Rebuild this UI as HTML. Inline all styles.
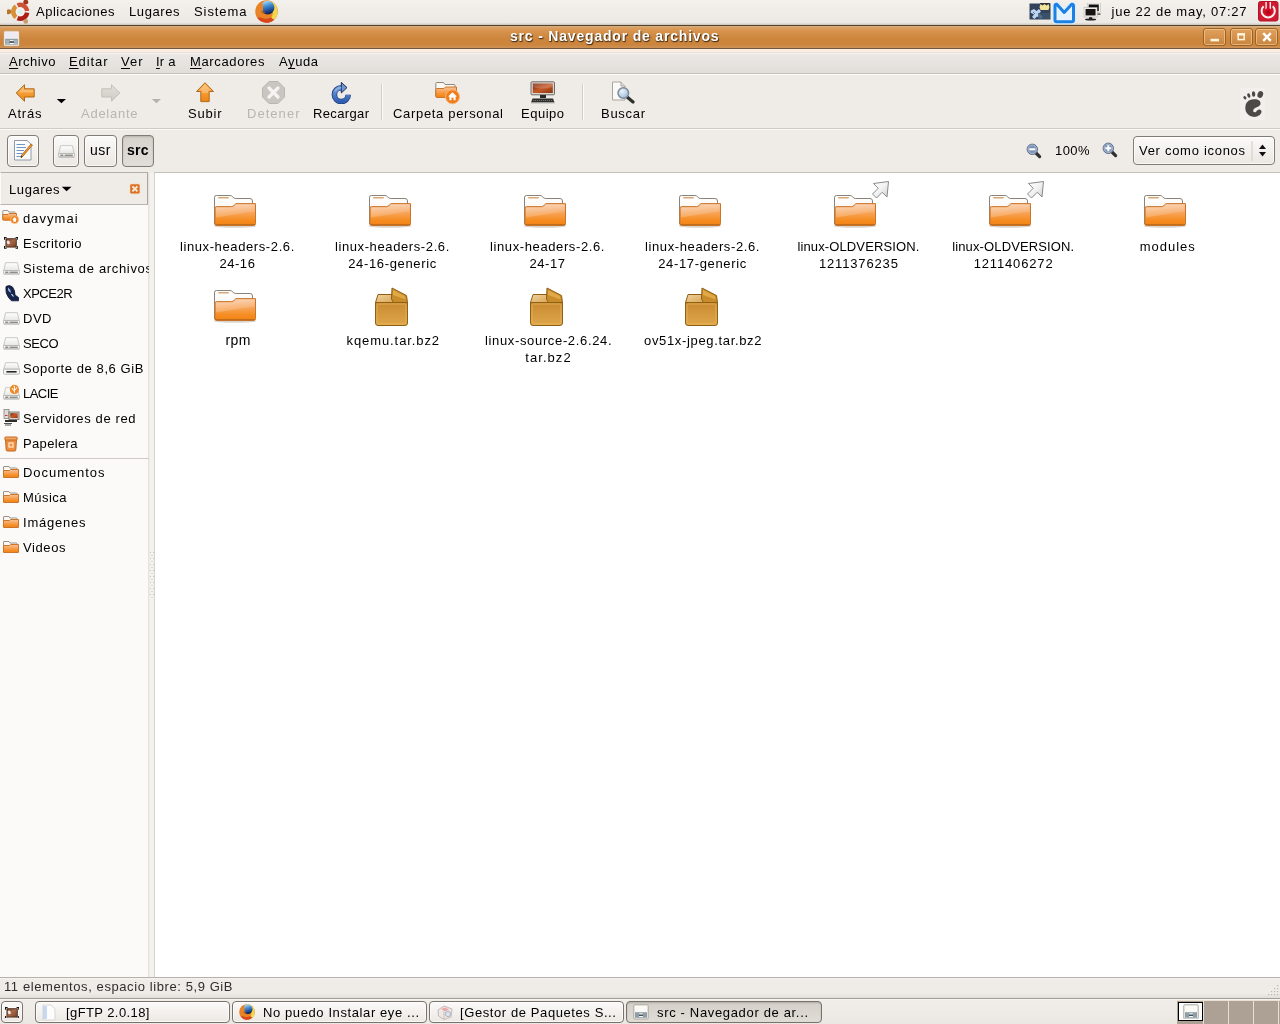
<!DOCTYPE html><html><head><meta charset="utf-8"><title>src</title><style>
*{margin:0;padding:0;box-sizing:border-box}
html,body{width:1280px;height:1024px;overflow:hidden;background:#efebe7;font-family:"Liberation Sans",sans-serif}
#root{position:absolute;left:0;top:0;width:1280px;height:1024px;will-change:transform;transform:translateZ(0)}
.a{position:absolute}
.t{position:absolute;white-space:nowrap;font-family:"Liberation Sans",sans-serif}
#toppanel{left:0;top:0;width:1280px;height:25px;background:linear-gradient(#f4f1ed 0,#ece8e3 23px,#d2cec8 24px,#c9c5bf 25px)}
#title{left:0;top:25px;width:1280px;height:24px;background:linear-gradient(#5e4224 0,#5e4224 1px,#cdb08a 1px,#d4a878 2px,#dc9c58 3px,#d48f48 8px,#cd853c 14px,#cc853e 20px,#cf8f4e 22px,#c98f5a 23px,#76563a 23px,#76563a 24px)}
#menubar{left:0;top:49px;width:1280px;height:25px;background:linear-gradient(#fff0e4 0,#fbece1 3px,#e9e1d9 3px,#e9e1d9 4px,#f6f3ef 4px,#f6f3ef 5px,#eae8e5 5px,#e6e3df 15px,#e1ded9 24px,#c6c2bc 24px,#c6c2bc 25px)}
#toolbar{left:0;top:74px;width:1280px;height:55px;background:#efebe7;border-top:1px solid #fbfaf9;border-bottom:1px solid #cfcac3}
#locbar{left:0;top:129px;width:1280px;height:43px;background:#efebe7;border-top:1px solid #faf9f7}
.wb{position:absolute;top:28px;height:18px;width:23px;border:1px solid #9a6428;border-radius:3px;background:linear-gradient(#e0a05c,#c98540);box-shadow:inset 0 0 0 1px rgba(255,215,160,.55)}
.btn{position:absolute;border:1px solid #807b74;border-radius:4px;background:linear-gradient(#fbfaf9,#ebe7e2);box-shadow:inset 0 0 0 1px rgba(255,255,255,.7)}
.sep{position:absolute;width:1px;background:#d3cec7;border-right:1px solid #fbfaf9;box-sizing:content-box}
#sidebar{left:0;top:172px;width:149px;height:805px;background:#fbfaf9;overflow:hidden;border-right:1px solid #e6e2dd}
#sidehead{left:0;top:0;width:148px;height:33px;background:#efebe7;border:1px solid #aaa69f;border-left:1px solid #fbfaf9;border-top-color:#b3afa8;border-bottom-color:#b8b4ad}
#content{left:154px;top:172px;width:1126px;height:805px;background:#fff;border-top:1px solid #c4c0ba;border-left:1px solid #d6d2cc}
#status{left:0;top:977px;width:1280px;height:21px;background:linear-gradient(#b5b1ab 0,#b5b1ab 1px,#f6f4f1 1px,#efebe7 3px,#efebe7 16px,#e2ded9 21px)}
#botpanel{left:0;top:998px;width:1280px;height:26px;background:linear-gradient(#a19d96 0,#a19d96 1px,#faf9f7 1px,#f1eeea 2px,#ebe7e2)}
.task{position:absolute;top:1001px;height:22px;border:1px solid #77736c;border-radius:4px;background:linear-gradient(#fbfaf9,#ece8e3);box-shadow:inset 0 0 0 1px rgba(255,255,255,.7)}
.task.act{background:linear-gradient(#d5d0c9,#e0dcd6);box-shadow:inset 0 1px 2px rgba(0,0,0,.18)}
</style></head><body><div id="root"><svg width="0" height="0" style="position:absolute"><defs>
<linearGradient id="gF" x1="0" y1="0" x2="0" y2="1"><stop offset="0" stop-color="#f9c39a"/><stop offset=".4" stop-color="#f7a55c"/><stop offset=".75" stop-color="#f68d22"/><stop offset="1" stop-color="#f38213"/></linearGradient>
<linearGradient id="gFg" x1="0" y1="0" x2="1" y2="1"><stop offset="0" stop-color="#fff" stop-opacity=".35"/><stop offset="1" stop-color="#fff" stop-opacity=".05"/></linearGradient>
<linearGradient id="gBack" x1="0" y1="0" x2="0" y2="1"><stop offset="0" stop-color="#ffffff"/><stop offset="1" stop-color="#f3ede6"/></linearGradient>
<linearGradient id="gPk" x1="0" y1="0" x2="0" y2="1"><stop offset="0" stop-color="#c98a30"/><stop offset="1" stop-color="#dfa64a"/></linearGradient>
<linearGradient id="gPkT" x1="0" y1="0" x2="1" y2="1"><stop offset="0" stop-color="#f0d3a0"/><stop offset="1" stop-color="#d9a655"/></linearGradient>
<linearGradient id="gArr" x1="0" y1="0" x2="0" y2="1"><stop offset="0" stop-color="#fbb658"/><stop offset="1" stop-color="#ee8412"/></linearGradient>
<linearGradient id="gArrD" x1="0" y1="0" x2="0" y2="1"><stop offset="0" stop-color="#e2dfda"/><stop offset="1" stop-color="#cfcbc5"/></linearGradient>
<linearGradient id="gLnk" x1="0" y1="0" x2="1" y2="1"><stop offset="0" stop-color="#ffffff"/><stop offset=".5" stop-color="#f2f2f2"/><stop offset="1" stop-color="#cdcdcd"/></linearGradient>
<linearGradient id="gDrv" x1="0" y1="0" x2="0" y2="1"><stop offset="0" stop-color="#ffffff"/><stop offset="1" stop-color="#e6e6e3"/></linearGradient>
<linearGradient id="gScr" x1="0" y1="0" x2="1" y2="1"><stop offset="0" stop-color="#7a2208"/><stop offset=".5" stop-color="#c65a28"/><stop offset="1" stop-color="#8a3414"/></linearGradient>
<linearGradient id="gDsk" x1="0" y1="0" x2="1" y2="1"><stop offset="0" stop-color="#6a3a22"/><stop offset=".45" stop-color="#a8684a"/><stop offset="1" stop-color="#74401f"/></linearGradient>
<linearGradient id="gBlu" x1="0" y1="0" x2="0" y2="1"><stop offset="0" stop-color="#6f9fe0"/><stop offset="1" stop-color="#2f5eb0"/></linearGradient>
<radialGradient id="gLens" cx=".4" cy=".35" r=".7"><stop offset="0" stop-color="#eaf3fb"/><stop offset="1" stop-color="#9db8d6"/></radialGradient>
<filter id="soft" x="-10%" y="-10%" width="120%" height="120%"><feGaussianBlur stdDeviation=".45"/></filter>
<radialGradient id="gFxB" cx=".4" cy=".4" r=".65"><stop offset="0" stop-color="#f09432"/><stop offset=".7" stop-color="#e57e26"/><stop offset="1" stop-color="#c25a18"/></radialGradient>
<linearGradient id="gFxG" x1=".3" y1="0" x2=".6" y2="1"><stop offset="0" stop-color="#b4e2fa"/><stop offset=".35" stop-color="#4a94d6"/><stop offset=".7" stop-color="#1f4f9c"/><stop offset="1" stop-color="#10163a"/></linearGradient>
<radialGradient id="gFx" cx=".5" cy=".5" r=".5"><stop offset="0" stop-color="#1a1d45"/><stop offset=".45" stop-color="#2a3a78"/><stop offset=".5" stop-color="#d88a28"/><stop offset="1" stop-color="#e67a22"/></radialGradient>

<symbol id="folder" viewBox="0 0 44 34">
 <ellipse cx="22" cy="32" rx="21.5" ry="1.8" fill="#5a3a1a" opacity=".22"/>
 <path d="M1.5,30 V3.2 Q1.5,1.5 3.5,1.5 H17 Q18.8,1.5 19.8,3 Q20.8,4.5 22.8,4.5 H37 Q39.5,4.5 39.5,7 V30 Z" fill="url(#gBack)" stroke="#8b837a" stroke-width="1"/>
 <rect x="5" y="3" width="11" height="1.6" rx=".8" fill="#d8a878"/>
 <path d="M2,14.2 Q2,12.6 3.6,12.6 H18.5 Q20.4,12.6 21.3,11 Q22.2,9.6 24,9.6 H42.5 V29.5 Q42.5,31.5 40.5,31.5 H3.5 Q2,31.5 2,29.5 Z" fill="url(#gF)" stroke="#c9762c" stroke-width="1"/>
 <path d="M3,14.6 Q3,13.6 4,13.6 H19 Q20.8,13.6 21.8,12 Q22.5,10.6 24,10.6 H41.5 V17.5 L3,23.5 Z" fill="url(#gFg)"/>
 <path d="M2,30.6 H42" stroke="#a8611f" stroke-width="1" opacity=".7"/>
</symbol>

<symbol id="lnk" viewBox="0 0 20 20">
 <path d="M18.5,1.5 L17,17 L12.2,12.3 L6.5,18 L2.5,14 L8.2,8.3 L3.5,3.5 Z" fill="url(#gLnk)" stroke="#7e7e7e" stroke-width=".9" stroke-linejoin="round"/>
</symbol>

<symbol id="pkg" viewBox="0 0 36 40">
 <path d="M1.5,15.5 L4,7.5 H18 L20,15.5 Z" fill="url(#gPkT)" stroke="#8f5f14" stroke-width="1" stroke-linejoin="round"/>
 <path d="M1.5,15.5 H33.5 V36 Q33.5,38.5 31,38.5 H4 Q1.5,38.5 1.5,36 Z" fill="url(#gPk)" stroke="#8f5f14" stroke-width="1" stroke-linejoin="round"/>
 <rect x="3" y="17" width="29" height="20" rx="1.5" fill="none" stroke="#e8b860" stroke-width="1" opacity=".7"/>
 <path d="M18,1 L32.5,8.5 L33.5,15.5 H19.5 L17.5,12 Z" fill="#c98c2a" stroke="#8f5f14" stroke-width="1" stroke-linejoin="round"/>
 <path d="M19,3 L31,9.3 L31.6,12.5 L19,8 Z" fill="#e6b04c" opacity=".8"/>
</symbol>

<symbol id="sfolder" viewBox="0 0 16 16">
 <path d="M.5,13 V3 Q.5,2.5 1,2.5 H6 L7,4 H13.5 Q14,4 14,4.5 V13 Z" fill="#fbf7f2" stroke="#9c9287" stroke-width="1"/>
 <path d="M.5,6.5 H6.5 L7.5,5.5 H15.5 V13 Q15.5,13.5 15,13.5 H1 Q.5,13.5 .5,13 Z" fill="url(#gF)" stroke="#c9762c" stroke-width="1"/>
</symbol>

<symbol id="drive" viewBox="0 0 17 13">
 <path d="M.7,8.6 L2.6,.7 H14.4 L16.3,8.6 Z" fill="url(#gDrv)" stroke="#c2c2be" stroke-width=".9" stroke-linejoin="round"/>
 <rect x=".5" y="8.5" width="16" height="3.2" rx=".8" fill="#f6f6f4" stroke="#b2b2ae" stroke-width=".9"/>
 <path d="M2.2,10.2 H5.4 M6.6,10.2 H14.8" stroke="#5e5e5a" stroke-width="1"/><path d="M.5,12.5 H16.5" stroke="#000" stroke-opacity=".13" stroke-width="1"/>
</symbol>
<symbol id="rdrive" viewBox="0 0 17 13">
 <path d="M.7,7.2 L2.6,.7 H14.4 L16.3,7.2 Z" fill="url(#gDrv)" stroke="#c2c2be" stroke-width=".9" stroke-linejoin="round"/>
 <rect x=".5" y="7.2" width="16" height="5" rx=".8" fill="#f6f6f4" stroke="#b2b2ae" stroke-width=".9"/>
 <path d="M3.4,9.8 H13.6" stroke="#1c1c1c" stroke-width="1.5"/>
</symbol>

<symbol id="zmag" viewBox="0 0 16 16">
 <path d="M9.5,9.5 L13.6,13.6" stroke="#30302e" stroke-width="3.2" stroke-linecap="round"/>
 <circle cx="6.3" cy="6.3" r="5.2" fill="#7d93b6" stroke="#5e6f8a" stroke-width="1"/>
 <circle cx="6.3" cy="6.3" r="4.2" fill="none" stroke="#b4c3d8" stroke-width="1" opacity=".8"/>
</symbol>
<symbol id="mag" viewBox="0 0 14 14">
 <path d="M8,8 L12.3,12.3" stroke="#3a3a38" stroke-width="2.6" stroke-linecap="round"/>
 <circle cx="5.5" cy="5.5" r="4.3" fill="url(#gLens)" stroke="#6d7b8c" stroke-width="1.3"/>
</symbol>
</defs></svg>
<div id="toppanel" class="a"></div>
<span class="t " style="left:36.0px;top:4.0px;font-size:13px;line-height:16px;letter-spacing:0.50px;color:#000;">Aplicaciones</span>
<span class="t " style="left:129.0px;top:4.0px;font-size:13px;line-height:16px;letter-spacing:0.59px;color:#000;">Lugares</span>
<span class="t " style="left:194.0px;top:4.0px;font-size:13px;line-height:16px;letter-spacing:0.92px;color:#000;">Sistema</span>
<span class="t " style="left:1111.5px;top:4.0px;font-size:13px;line-height:16px;letter-spacing:0.77px;color:#000;">jue 22 de may, 07:27</span>
<div id="title" class="a"></div>
<span class="t " style="left:510.0px;top:28.1px;font-size:14px;line-height:17px;letter-spacing:0.81px;color:#fff;font-weight:bold;text-shadow:1px 1px 1px #4e3212,0 1px 1px #6b4520;">src - Navegador de archivos</span>
<div class="wb" style="left:1203px"></div>
<div class="wb" style="left:1230px"></div>
<div class="wb" style="left:1255px"></div>
<div id="menubar" class="a"></div>
<span class="t" style="left:9px;top:53.5px;font-size:13px;line-height:16px;letter-spacing:0.53px"><u style="text-underline-offset:2px;text-decoration-thickness:1px;text-decoration-skip-ink:none">A</u>rchivo</span>
<span class="t" style="left:69px;top:53.5px;font-size:13px;line-height:16px;letter-spacing:0.91px"><u style="text-underline-offset:2px;text-decoration-thickness:1px;text-decoration-skip-ink:none">E</u>ditar</span>
<span class="t" style="left:121px;top:53.5px;font-size:13px;line-height:16px;letter-spacing:0.99px"><u style="text-underline-offset:2px;text-decoration-thickness:1px;text-decoration-skip-ink:none">V</u>er</span>
<span class="t" style="left:156px;top:53.5px;font-size:13px;line-height:16px;letter-spacing:0.24px"><u style="text-underline-offset:2px;text-decoration-thickness:1px;text-decoration-skip-ink:none">I</u>r a</span>
<span class="t" style="left:190px;top:53.5px;font-size:13px;line-height:16px;letter-spacing:0.65px"><u style="text-underline-offset:2px;text-decoration-thickness:1px;text-decoration-skip-ink:none">M</u>arcadores</span>
<span class="t" style="left:279px;top:53.5px;font-size:13px;line-height:16px;letter-spacing:0.59px">A<u style="text-underline-offset:2px;text-decoration-thickness:1px;text-decoration-skip-ink:none">y</u>uda</span>
<div id="toolbar" class="a"></div>
<span class="t " style="left:8.0px;top:105.5px;font-size:13px;line-height:16px;letter-spacing:0.79px;color:#000;">Atrás</span>
<span class="t " style="left:81.0px;top:105.5px;font-size:13px;line-height:16px;letter-spacing:0.74px;color:#b9b5af;">Adelante</span>
<span class="t " style="left:188.0px;top:105.5px;font-size:13px;line-height:16px;letter-spacing:0.79px;color:#000;">Subir</span>
<span class="t " style="left:247.0px;top:105.5px;font-size:13px;line-height:16px;letter-spacing:1.04px;color:#b9b5af;">Detener</span>
<span class="t " style="left:313.0px;top:105.5px;font-size:13px;line-height:16px;letter-spacing:0.36px;color:#000;">Recargar</span>
<span class="t " style="left:393.0px;top:105.5px;font-size:13px;line-height:16px;letter-spacing:0.68px;color:#000;">Carpeta personal</span>
<span class="t " style="left:521.0px;top:105.5px;font-size:13px;line-height:16px;letter-spacing:0.50px;color:#000;">Equipo</span>
<span class="t " style="left:601.0px;top:105.5px;font-size:13px;line-height:16px;letter-spacing:0.71px;color:#000;">Buscar</span>
<div class="sep" style="left:381px;top:84px;height:36px"></div>
<div class="sep" style="left:582px;top:84px;height:36px"></div>
<div id="locbar" class="a"></div>
<div class="btn" style="left:7px;top:135px;width:32px;height:32px"></div>
<div class="btn" style="left:53px;top:135px;width:26px;height:32px"></div>
<div class="btn" style="left:84px;top:135px;width:33px;height:32px"></div>
<div class="btn" style="left:122px;top:135px;width:32px;height:32px;background:linear-gradient(#d6d2cc,#e1ddd8);box-shadow:inset 0 1px 2px rgba(0,0,0,.15)"></div>
<span class="t " style="left:90.0px;top:141.6px;font-size:14px;line-height:17px;letter-spacing:0.53px;color:#000;">usr</span>
<span class="t " style="left:127.0px;top:141.6px;font-size:14px;line-height:17px;letter-spacing:0.24px;color:#000;font-weight:bold;">src</span>
<span class="t " style="left:1055.0px;top:142.5px;font-size:13px;line-height:16px;letter-spacing:0.42px;color:#000;">100%</span>
<div class="btn" style="left:1133px;top:136px;width:142px;height:29px"></div>
<span class="t " style="left:1139.0px;top:142.5px;font-size:13px;line-height:16px;letter-spacing:0.71px;color:#000;">Ver como iconos</span>
<div id="sidebar" class="a"><div id="sidehead" class="a"></div></div>
<span class="t " style="left:9.0px;top:181.5px;font-size:13px;line-height:16px;letter-spacing:0.59px;color:#000;">Lugares</span>
<div class="a" style="left:0;top:172px;width:149px;height:805px;overflow:hidden"><span class="t " style="left:23.0px;top:38.5px;font-size:13px;line-height:16px;letter-spacing:1.02px;color:#000;">davymai</span><span class="t " style="left:23.0px;top:63.5px;font-size:13px;line-height:16px;letter-spacing:0.48px;color:#000;">Escritorio</span><span class="t " style="left:23.0px;top:88.5px;font-size:13px;line-height:16px;letter-spacing:0.66px;color:#000;">Sistema de archivos</span><span class="t " style="left:23.0px;top:113.5px;font-size:13px;line-height:16px;letter-spacing:-0.50px;color:#000;">XPCE2R</span><span class="t " style="left:23.0px;top:138.5px;font-size:13px;line-height:16px;letter-spacing:0.53px;color:#000;">DVD</span><span class="t " style="left:23.0px;top:163.5px;font-size:13px;line-height:16px;letter-spacing:-0.45px;color:#000;">SECO</span><span class="t " style="left:23.0px;top:188.5px;font-size:13px;line-height:16px;letter-spacing:0.58px;color:#000;">Soporte de 8,6 GiB</span><span class="t " style="left:23.0px;top:213.5px;font-size:13px;line-height:16px;letter-spacing:-0.52px;color:#000;">LACIE</span><span class="t " style="left:23.0px;top:238.5px;font-size:13px;line-height:16px;letter-spacing:0.62px;color:#000;">Servidores de red</span><span class="t " style="left:23.0px;top:263.5px;font-size:13px;line-height:16px;letter-spacing:0.35px;color:#000;">Papelera</span><span class="t " style="left:23.0px;top:292.5px;font-size:13px;line-height:16px;letter-spacing:0.95px;color:#000;">Documentos</span><span class="t " style="left:23.0px;top:317.5px;font-size:13px;line-height:16px;letter-spacing:0.46px;color:#000;">Música</span><span class="t " style="left:23.0px;top:342.5px;font-size:13px;line-height:16px;letter-spacing:0.77px;color:#000;">Imágenes</span><span class="t " style="left:23.0px;top:367.5px;font-size:13px;line-height:16px;letter-spacing:0.60px;color:#000;">Videos</span><div class="a" style="left:0;top:286px;width:149px;height:1px;background:#cfcac3"></div></div>
<div class="a" style="left:150px;top:173px;width:4px;height:804px;background:#f4f2ef"></div>
<svg class="a" style="left:150px;top:552px" width="4" height="48"><rect x="0" y="0" width="1" height="1" fill="#c9c5bf"/><rect x="3" y="0" width="1" height="1" fill="#c9c5bf"/><rect x="1.5" y="3" width="1" height="1" fill="#c9c5bf"/><rect x="0" y="6" width="1" height="1" fill="#c9c5bf"/><rect x="3" y="6" width="1" height="1" fill="#c9c5bf"/><rect x="1.5" y="9" width="1" height="1" fill="#c9c5bf"/><rect x="0" y="12" width="1" height="1" fill="#c9c5bf"/><rect x="3" y="12" width="1" height="1" fill="#c9c5bf"/><rect x="1.5" y="15" width="1" height="1" fill="#c9c5bf"/><rect x="0" y="18" width="1" height="1" fill="#c9c5bf"/><rect x="3" y="18" width="1" height="1" fill="#c9c5bf"/><rect x="1.5" y="21" width="1" height="1" fill="#c9c5bf"/><rect x="0" y="24" width="1" height="1" fill="#c9c5bf"/><rect x="3" y="24" width="1" height="1" fill="#c9c5bf"/><rect x="1.5" y="27" width="1" height="1" fill="#c9c5bf"/><rect x="0" y="30" width="1" height="1" fill="#c9c5bf"/><rect x="3" y="30" width="1" height="1" fill="#c9c5bf"/><rect x="1.5" y="33" width="1" height="1" fill="#c9c5bf"/><rect x="0" y="36" width="1" height="1" fill="#c9c5bf"/><rect x="3" y="36" width="1" height="1" fill="#c9c5bf"/><rect x="1.5" y="39" width="1" height="1" fill="#c9c5bf"/><rect x="0" y="42" width="1" height="1" fill="#c9c5bf"/><rect x="3" y="42" width="1" height="1" fill="#c9c5bf"/><rect x="1.5" y="45" width="1" height="1" fill="#c9c5bf"/></svg>
<div id="content" class="a"></div>
<span class="t " style="left:179.9px;top:238.5px;font-size:13px;line-height:16px;letter-spacing:0.61px;color:#000;">linux-headers-2.6.</span>
<span class="t " style="left:219.4px;top:255.5px;font-size:13px;line-height:16px;letter-spacing:0.56px;color:#000;">24-16</span>
<span class="t " style="left:334.9px;top:238.5px;font-size:13px;line-height:16px;letter-spacing:0.61px;color:#000;">linux-headers-2.6.</span>
<span class="t " style="left:348.2px;top:255.5px;font-size:13px;line-height:16px;letter-spacing:0.65px;color:#000;">24-16-generic</span>
<span class="t " style="left:490.0px;top:238.5px;font-size:13px;line-height:16px;letter-spacing:0.61px;color:#000;">linux-headers-2.6.</span>
<span class="t " style="left:529.5px;top:255.5px;font-size:13px;line-height:16px;letter-spacing:0.56px;color:#000;">24-17</span>
<span class="t " style="left:645.0px;top:238.5px;font-size:13px;line-height:16px;letter-spacing:0.61px;color:#000;">linux-headers-2.6.</span>
<span class="t " style="left:658.2px;top:255.5px;font-size:13px;line-height:16px;letter-spacing:0.65px;color:#000;">24-17-generic</span>
<span class="t " style="left:797.4px;top:238.5px;font-size:13px;line-height:16px;letter-spacing:0.13px;color:#000;">linux-OLDVERSION.</span>
<span class="t " style="left:818.9px;top:255.5px;font-size:13px;line-height:16px;letter-spacing:0.85px;color:#000;">1211376235</span>
<span class="t " style="left:952.2px;top:238.5px;font-size:13px;line-height:16px;letter-spacing:0.13px;color:#000;">linux-OLDVERSION.</span>
<span class="t " style="left:973.7px;top:255.5px;font-size:13px;line-height:16px;letter-spacing:0.85px;color:#000;">1211406272</span>
<span class="t " style="left:1139.8px;top:238.5px;font-size:13px;line-height:16px;letter-spacing:0.98px;color:#000;">modules</span>
<span class="t " style="left:225.5px;top:331.6px;font-size:14px;line-height:17px;letter-spacing:0.44px;color:#000;">rpm</span>
<span class="t " style="left:346.6px;top:332.5px;font-size:13px;line-height:16px;letter-spacing:0.90px;color:#000;">kqemu.tar.bz2</span>
<span class="t " style="left:485.0px;top:332.5px;font-size:13px;line-height:16px;letter-spacing:0.65px;color:#000;">linux-source-2.6.24.</span>
<span class="t " style="left:525.3px;top:349.5px;font-size:13px;line-height:16px;letter-spacing:1.05px;color:#000;">tar.bz2</span>
<span class="t " style="left:644.0px;top:332.5px;font-size:13px;line-height:16px;letter-spacing:0.66px;color:#000;">ov51x-jpeg.tar.bz2</span>
<div id="status" class="a"></div>
<span class="t " style="left:4.0px;top:979.0px;font-size:13px;line-height:16px;letter-spacing:0.59px;color:#2e2e2e;">11 elementos, espacio libre: 5,9 GiB</span>
<div id="botpanel" class="a"></div>
<svg class="a" style="left:1268px;top:984px" width="12" height="13"><rect x="9" y="1" width="1.2" height="1.2" fill="#b9b4ad"/><rect x="6" y="4" width="1.2" height="1.2" fill="#b9b4ad"/><rect x="9" y="4" width="1.2" height="1.2" fill="#b9b4ad"/><rect x="3" y="7" width="1.2" height="1.2" fill="#b9b4ad"/><rect x="6" y="7" width="1.2" height="1.2" fill="#b9b4ad"/><rect x="9" y="7" width="1.2" height="1.2" fill="#b9b4ad"/><rect x="0" y="10" width="1.2" height="1.2" fill="#b9b4ad"/><rect x="3" y="10" width="1.2" height="1.2" fill="#b9b4ad"/><rect x="6" y="10" width="1.2" height="1.2" fill="#b9b4ad"/><rect x="9" y="10" width="1.2" height="1.2" fill="#b9b4ad"/></svg>
<div class="task" style="left:1px;width:22px"></div>
<div class="task" style="left:35px;width:195px"></div>
<div class="task" style="left:232px;width:195px"></div>
<div class="task" style="left:429px;width:195px"></div>
<div class="task act" style="left:626px;width:196px"></div>
<span class="t " style="left:66.0px;top:1005.0px;font-size:13px;line-height:16px;letter-spacing:0.41px;color:#000;">[gFTP 2.0.18]</span>
<span class="t " style="left:263.0px;top:1005.0px;font-size:13px;line-height:16px;letter-spacing:0.60px;color:#000;">No puedo Instalar eye ...</span>
<span class="t " style="left:460.0px;top:1005.0px;font-size:13px;line-height:16px;letter-spacing:0.59px;color:#000;">[Gestor de Paquetes S...</span>
<span class="t " style="left:657.0px;top:1005.0px;font-size:13px;line-height:16px;letter-spacing:0.66px;color:#000;">src - Navegador de ar...</span>
<svg class="a" style="left:7px;top:0px" width="24" height="24" viewBox="0 0 24 24">
<g transform="translate(13.2,11.8) scale(1.07)">
 <path d="M-3.85,5.11 A6.4,6.4 0 0 1 -3.85,-5.11" fill="none" stroke="#d69038" stroke-width="4.3"/>
 <path d="M-2.50,-5.89 A6.4,6.4 0 0 1 6.35,-0.78" fill="none" stroke="#cb5236" stroke-width="4.3"/>
 <path d="M6.35,0.78 A6.4,6.4 0 0 1 -2.50,5.89" fill="none" stroke="#ae1d16" stroke-width="4.3"/>
 <circle cx="0" cy="0" r="4.2" fill="#fdeeee"/><circle cx="-.3" cy="0" r="2.5" fill="#d2f6ee"/>
 <circle cx="-10.60" cy="0.00" r="2.3" fill="#b87428"/>
 <circle cx="5.20" cy="-9.01" r="2.3" fill="#a2341a"/>
 <circle cx="5.20" cy="9.01" r="2.2" fill="#c79a70"/>
</g></svg>
<svg class="a" style="left:253.5px;top:-1.0px" width="25.0" height="25.0" viewBox="0 0 25.0 25.0"><g transform="translate(12.5,12.5) scale(1.0)" filter="url(#soft)">
 <circle r="11.2" fill="url(#gFxB)"/>
 <path d="M3,-10.8 A11.2,11.2 0 0 1 7.5,8.3 Q4,7.5 5.5,3 Q9,-3 3,-10.8 Z" fill="#f2d84e"/>
 <path d="M-9.3,6.2 A11.2,11.2 0 0 0 7.5,8.3 Q5,5.5 1,5.8 Q-5,6 -9.3,6.2 Z" fill="#d8461c"/>
 <circle cx="1" cy="-3.8" r="6.9" fill="url(#gFxG)"/>
 <path d="M-4.5,-9 Q-2.5,-5 -3.5,-2 Q-4,1.5 -1,3.3 Q3,5 6.8,1.5 Q5,7.5 -1,7.3 Q-7,6.5 -9.5,2 Q-11,-3 -8,-7.5 Q-6,-9.5 -4.5,-9Z" fill="#e98428"/>
 <path d="M-5.5,-1 Q-3,1 -1.5,0 Q-1.5,2.2 -3.5,2 Q-5,1.2 -5.5,-1Z" fill="#a9521a"/>
</g></svg>
<svg class="a" style="left:1029px;top:3px" width="22" height="17" viewBox="0 0 22 17"><rect x=".5" y=".5" width="21" height="16" fill="#32425a"/>
<path d="M2,7.5 l3,-1.5 2.5,2 2.5,-2 2,2.5 -2,2 3.5,3 -2,2.5 -3.5,-2.5 -2.5,2.5 -2.5,-2 2,-2.5 -3.5,-2z" fill="#bcd3f2"/><path d="M4,9 l2,2 M9,14 l2,1" stroke="#5b78a8" stroke-width="1"/>
<path d="M11,0 h10 v7 h-10 z" fill="#2a2f3a"/>
<path d="M11.5,1 l2,1.5 2,-1.5 2,1.5 2,-1.5 1,3 -1,3 h-8 l-1,-3z" fill="#f1e39a"/>
<path d="M9,10 h12 v6 h-12z" fill="#3d556e" opacity=".8"/></svg>
<svg class="a" style="left:1052px;top:1px" width="24" height="23" viewBox="0 0 24 23"><path d="M3,19 V5 Q3,3.2 4.8,3.2 L12.2,11.5 L19.7,3.2 Q21.5,3.2 21.5,5 V19 Q21.5,20.8 19.7,20.8 H4.8 Q3,20.8 3,19Z" fill="#eaf5ff" stroke="#d9eeff" stroke-width="5" stroke-linejoin="round"/>
<path d="M3,19 V5 Q3,3.2 4.8,3.2 L12.2,11.5 L19.7,3.2 Q21.5,3.2 21.5,5 V19 Q21.5,20.8 19.7,20.8 H4.8 Q3,20.8 3,19Z" fill="#e6f3ff" stroke="#1b82e4" stroke-width="3" stroke-linejoin="round"/></svg>
<svg class="a" style="left:1083px;top:3px" width="18" height="18" viewBox="0 0 18 18"><rect x="5" y=".8" width="11.5" height="8" fill="#111" stroke="#f4f3f1" stroke-width="1.4"/><rect x="4.2" y="0" width="13.1" height="9.6" fill="none" stroke="#b4b1ac" stroke-width=".5"/>
<rect x="1.8" y="5.2" width="11.5" height="8" fill="#15120f" stroke="#f6f5f3" stroke-width="1.5"/><rect x="1" y="4.4" width="13.1" height="9.6" fill="none" stroke="#aaa7a2" stroke-width=".5"/>
<rect x="6" y="14.2" width="3.2" height="1.8" fill="#222"/><ellipse cx="7.6" cy="16.6" rx="5.6" ry="1" fill="#1e1e1e"/>
<rect x="14.5" y="10.5" width="3" height="1.2" fill="#333"/></svg>
<svg class="a" style="left:1258px;top:1px" width="21" height="21" viewBox="0 0 21 21"><rect x=".5" y=".5" width="19.5" height="19.5" rx="2" fill="#cf1a30" stroke="#b31226" stroke-width="1"/>
<path d="M5.6,5.2 A6.6,6.6 0 1 0 14.8,5.2" fill="none" stroke="#fdeff0" stroke-width="2"/>
<rect x="7.4" y="1" width="5.6" height="10.5" fill="#fdeff0"/><rect x="8.8" y="1" width="2.8" height="9.5" fill="#d01028"/>
<circle cx="10.2" cy="11" r="3.8" fill="#d40d24"/><circle cx="10.2" cy="11.5" r="2" fill="#b00818"/></svg>
<svg class="a" style="left:3px;top:29.8px" width="17" height="17" viewBox="0 0 15.6 16"><rect x=".5" y=".8" width="14.6" height="14.4" rx="1" fill="#fbf6ee" stroke="#b48b58" stroke-width="1" stroke-opacity=".6"/>
<rect x="2" y="2" width="11.5" height="5.5" fill="#eeeaf2"/>
<rect x="1.8" y="8.2" width="12" height="5.6" fill="#8e9ea8"/>
<rect x="2.5" y="10" width="3" height="1" fill="#b8c8d0"/><rect x="10" y="10" width="3" height="1" fill="#b8c8d0"/>
<rect x="2.5" y="12" width="3" height="1" fill="#b8c8d0"/><rect x="10" y="12" width="3" height="1" fill="#b8c8d0"/>
<rect x="6.2" y="9.6" width="3.6" height="1" fill="#fff"/><rect x="6" y="10.8" width="4" height="1" fill="#222"/><rect x="6.2" y="12.2" width="3.6" height="1" fill="#fff"/></svg>
<svg class="a" style="left:1203px;top:28px" width="76" height="18" viewBox="0 0 76 18"><rect x="7.5" y="10.8" width="8.5" height="2.6" fill="#fff6dc"/>
<rect x="35.2" y="6" width="6" height="5.6" fill="none" stroke="#fff6dc" stroke-width="1.5"/><rect x="34.45" y="5.2" width="7.5" height="2.3" fill="#fff6dc"/>
<path d="M60.2,5.2 L67.8,12.8 M67.8,5.2 L60.2,12.8" stroke="#fff" stroke-width="2.4"/></svg>
<svg class="a" style="left:14px;top:82px" width="24" height="22" viewBox="0 0 24 22"><path d="M2.2,11 L10.5,2.7 V6.8 H20.2 V15 H10.5 V19.3 Z" fill="url(#gArr)" stroke="#b06a1c" stroke-width="1" stroke-linejoin="round"/><path d="M3.8,11 L9.6,5.2 V7.8 H19.2 V10.5 H4.4Z" fill="#fff" opacity=".25"/></svg>
<svg class="a" style="left:56px;top:98px" width="12" height="6" viewBox="0 0 12 6"><path d="M.8,1 H10 L5.4,5.2Z" fill="#000"/></svg>
<svg class="a" style="left:98px;top:82px" width="24" height="22" viewBox="0 0 24 22"><path d="M21.8,11 L13.5,2.7 V6.8 H3.8 V15 H13.5 V19.3 Z" fill="url(#gArrD)" stroke="#c4c0ba" stroke-width="1" stroke-linejoin="round"/></svg>
<svg class="a" style="left:151px;top:98px" width="12" height="6" viewBox="0 0 12 6"><path d="M.8,1 H10 L5.4,5.2Z" fill="#b5b1ab"/></svg>
<svg class="a" style="left:194px;top:81px" width="22" height="23" viewBox="0 0 22 23"><path d="M11,1.7 L19.5,10.5 H15.2 V20.6 H6.8 V10.5 H2.5 Z" fill="url(#gArr)" stroke="#b06a1c" stroke-width="1" stroke-linejoin="round"/><path d="M11,3.4 L17,9.5 H14.2 V12 H7.8 V9.5 H5Z" fill="#fff" opacity=".25"/></svg>
<svg class="a" style="left:261px;top:80px" width="25" height="25" viewBox="0 0 25 25"><path d="M8,1.5 H17 L23.5,8 V17 L17,23.5 H8 L1.5,17 V8 Z" fill="#c9c6c1" stroke="#bab7b2" stroke-width="1"/><path d="M8,8 L17,17 M17,8 L8,17" stroke="#f6f4f2" stroke-width="3.2" stroke-linecap="round"/></svg>
<svg class="a" style="left:330px;top:81px" width="22" height="23" viewBox="0 0 22 23"><path d="M11.3,6.8 A6.9,6.9 0 1 0 18.2,13.7" fill="none" stroke="#23407c" stroke-width="5.6"/>
<path d="M11.3,6.8 A6.9,6.9 0 1 0 18.2,13.9" fill="none" stroke="url(#gBlu)" stroke-width="4"/>
<path d="M11.3,1.4 L17,6.6 L11.3,12 Z" fill="#6f93cf" stroke="#1c2f66" stroke-width="1" stroke-linejoin="round"/>
<path d="M11.3,6.8 A6.9,6.9 0 0 0 5,10.5" fill="none" stroke="#9dbbe6" stroke-width="1.6" opacity=".7"/></svg>
<svg class="a" style="left:435px;top:81px" width="27" height="24" viewBox="0 0 27 24"><path d="M.8,15 V2.5 Q.8,1.5 1.8,1.5 H8.5 L10,3.5 H19 Q20,3.5 20,4.5 V15 Z" fill="#fbf7f2" stroke="#8e867c" stroke-width="1"/>
<path d="M.8,8.5 Q.8,7.5 1.8,7.5 H9 L10.5,6 H21.5 V15.5 Q21.5,16.5 20.5,16.5 H1.8 Q.8,16.5 .8,15.5 Z" fill="url(#gF)" stroke="#c9762c" stroke-width="1"/>
<circle cx="17.5" cy="15.8" r="7" fill="#ef7d1c" stroke="#f9b878" stroke-width="1"/>
<path d="M17.5,11.3 L22,15.6 H20.6 V19.3 H18.6 V16.8 H16.4 V19.3 H14.4 V15.6 H13 Z" fill="#fff"/></svg>
<svg class="a" style="left:530px;top:81px" width="26" height="23" viewBox="0 0 26 23"><rect x="1" y=".8" width="23.5" height="13" rx="1" fill="#d9d6d0" stroke="#6e6a64" stroke-width="1"/>
<rect x="2.8" y="2.5" width="20" height="9.5" fill="url(#gScr)"/>
<path d="M2.8,2.5 H22.8 V6 Q12,9 2.8,6Z" fill="#fff" opacity=".18"/>
<rect x="10" y="14" width="6" height="3" fill="#2a2a28"/>
<path d="M2.5,17.5 H23 L24.5,21.5 H1 Z" fill="#2e2e2c"/><path d="M3,19.5 H23" stroke="#888" stroke-width=".7" stroke-dasharray="1.2 .8"/>
<rect x="1" y="21.5" width="23.5" height="1" fill="#b9b6b0"/></svg>
<svg class="a" style="left:611px;top:81px" width="25" height="23" viewBox="0 0 25 23"><path d="M1.5,1 H10 L14,5 V19 H1.5 Z" fill="#fbfaf8" stroke="#a8a49e" stroke-width="1"/>
<path d="M10,1 V5 H14" fill="#e6e3de" stroke="#a8a49e" stroke-width="1"/>
<path d="M15.5,15.5 L22,21" stroke="#2e2e2c" stroke-width="3.2" stroke-linecap="round"/>
<circle cx="12.3" cy="12" r="5.3" fill="url(#gLens)" stroke="#7c8a9a" stroke-width="1.5"/></svg>
<svg class="a" style="left:1240px;top:88px" width="26" height="32" viewBox="0 0 26 32"><rect x="0" y="0" width="25" height="32" fill="#f6f4f2" opacity=".45"/>
<g fill="#4b4a47"><ellipse cx="20.3" cy="6.5" rx="2.8" ry="3.4" transform="rotate(18 20.3 6.5)"/>
<ellipse cx="13.6" cy="6" rx="1.7" ry="2.7" transform="rotate(-5 13.6 6)"/>
<ellipse cx="8.8" cy="7.5" rx="1.5" ry="2.3" transform="rotate(-20 8.8 7.5)"/>
<ellipse cx="4.9" cy="9.8" rx="1.3" ry="1.9" transform="rotate(-35 4.9 9.8)"/>
<path d="M12,11.5 C17,10.5 21,12 20.5,16 C20,19 15,19 13.5,21.5 C12.5,23.5 14,25 16,24 C17,21 20.5,20.5 21.5,23 C22,26.5 17,29.5 13,28.8 C7.5,28 4.5,23 5.5,18 C6,14.5 8.5,12 12,11.5 Z"/></g></svg>
<svg class="a" style="left:13px;top:139px" width="21" height="23" viewBox="0 0 21 23"><path d="M1.5,1.5 H14 L18,5 V21 H1.5 Z" fill="#fdfdfc" stroke="#8f9aa6" stroke-width="1"/>
<path d="M3.5,5.5 H12 M3.5,8.5 H13 M3.5,11.5 H11 M3.5,14.5 H9.5 M3.5,17.5 H8" stroke="#6f95c4" stroke-width="1.2"/>
<path d="M19.5,6 L10,17.2 L8,18.8 L8.6,16.2 L18,5 Z" fill="#f09a28" stroke="#a8601a" stroke-width=".8"/>
<path d="M8,18.8 L8.5,16.6 L9.8,17.6Z" fill="#222"/></svg>
<svg class="a" style="left:57.5px;top:144.5px;" width="17" height="13"><use href="#drive"/></svg>
<svg class="a" style="left:1025.5px;top:142.7px;" width="16" height="16"><use href="#zmag"/></svg>
<svg class="a" style="left:1025.5px;top:142.7px" width="16" height="16" viewBox="0 0 16 16"><rect x="3.3" y="5.3" width="6" height="2" fill="#fff"/></svg>
<svg class="a" style="left:1102px;top:142.3px;" width="16" height="16"><use href="#zmag"/></svg>
<svg class="a" style="left:1102px;top:142.3px" width="16" height="16" viewBox="0 0 16 16"><path d="M3.3,6.3 H9.3 M6.3,3.3 V9.3" stroke="#fff" stroke-width="2"/></svg>
<svg class="a" style="left:1251px;top:139px" width="20" height="24" viewBox="0 0 20 24"><path d="M1,2 V22" stroke="#cfcac3" stroke-width="1"/><path d="M11.5,5.5 L15,10 H8Z M11.5,17.5 L15,13 H8Z" fill="#111"/></svg>
<svg class="a" style="left:61px;top:186px" width="12" height="6" viewBox="0 0 12 6"><path d="M.8,.8 H10.5 L5.6,5.2Z" fill="#000"/></svg>
<svg class="a" style="left:129px;top:183px" width="12" height="12" viewBox="0 0 12 12"><rect x=".6" y=".6" width="10.6" height="10.6" rx="2" fill="#fbd9bd"/><rect x="1.2" y="1.2" width="9.4" height="9.4" rx="1.3" fill="#d9722a"/><path d="M3.4,3.4 L8.4,8.4 M8.4,3.4 L3.4,8.4" stroke="#fdebd8" stroke-width="1.9"/></svg>
<svg class="a" style="left:2px;top:209px" width="18" height="15" viewBox="0 0 18 15"><path d="M.8,10.5 V2 Q.8,1.5 1.3,1.5 H5.8 L6.8,3 H12.7 Q13.2,3 13.2,3.5 V10.5Z" fill="#fbf7f2" stroke="#9c9287" stroke-width="1"/>
<path d="M.8,5.5 H6 L7,4.5 H14.5 V10.5 Q14.5,11.2 13.8,11.2 H1.5 Q.8,11.2 .8,10.5Z" fill="url(#gF)" stroke="#c9762c" stroke-width="1"/>
<circle cx="12.6" cy="10.6" r="4" fill="#ef7d1c" stroke="#f9c08a" stroke-width=".8"/><path d="M12.6,8 L15,10.6 H14 V12.8 H11.2 V10.6 H10.2Z" fill="#fff"/></svg>
<svg class="a" style="left:4px;top:237.1px" width="14.2" height="11.8" viewBox="0 0 14.2 11.8"><rect x=".5" y=".5" width="13.2" height="10.8" fill="#fff"/><path d="M0,0 h2.6 v1 h-1.6 v1.8 h-1z M14.2,0 h-2.6 v1 h1.6 v1.8 h1z M0,11.8 h2.6 v-1 h-1.6 v-1.8 h-1z M14.2,11.8 h-2.6 v-1 h1.6 v-1.8 h1z" fill="#111"/>
<rect x="1.9" y="1.7" width="10.4" height="8.4" fill="url(#gDsk)" stroke="#3c2214" stroke-width=".8"/><ellipse cx="4.3" cy="5.3" rx="1.5" ry="1.9" fill="#fff" opacity=".85" transform="rotate(-25 4.3 5.3)"/></svg>
<svg class="a" style="left:3px;top:262px;" width="17" height="13"><use href="#drive"/></svg>
<svg class="a" style="left:4px;top:285px" width="16" height="17" viewBox="0 0 16 17"><path d="M2,1.5 Q5.5,-.5 8.5,2 Q11,5 11,10 L14.5,12.5 V15.8 H7.5 L4.5,12.5 Q1,8 2,1.5Z" fill="#16264e" stroke="#0b1430" stroke-width=".8"/>
<path d="M4,2.5 Q6.5,4 7,8 Q5,7 4,5Z" fill="#9db6e0"/><path d="M7.5,9 L9.5,11.5" stroke="#dfe8f6" stroke-width="1.2"/></svg>
<svg class="a" style="left:3px;top:312px;" width="17" height="13"><use href="#drive"/></svg>
<svg class="a" style="left:3px;top:337px;" width="17" height="13"><use href="#drive"/></svg>
<svg class="a" style="left:3px;top:362px;" width="17" height="13"><use href="#rdrive"/></svg>
<svg class="a" style="left:3px;top:387px;" width="17" height="13"><use href="#drive"/></svg>
<svg class="a" style="left:9.2px;top:383.8px" width="11" height="11" viewBox="0 0 11 11"><circle cx="5.4" cy="5.4" r="4.6" fill="#ee8a2a"/><path d="M5.4,1.8 V8.6 M3.2,4 Q3.2,6 5.4,6.6 M7.6,3.4 Q7.6,5.4 5.4,6" stroke="#fff" stroke-width="1" fill="none"/></svg>
<svg class="a" style="left:3px;top:409px" width="17" height="17" viewBox="0 0 17 17"><rect x="1" y=".5" width="5" height="9" fill="#dedbd6" stroke="#88847e" stroke-width=".8"/>
<rect x="6" y="3" width="10" height="7.5" fill="#d9d6d0" stroke="#66625c" stroke-width=".8"/><rect x="7.3" y="4.2" width="7.4" height="4.8" fill="url(#gScr)"/>
<rect x="2" y="11" width="12" height="2" fill="#2c2c2a"/><path d="M1,14.5 H9 M2,16 H8" stroke="#444" stroke-width=".9"/><rect x="2" y="6" width="2.5" height="1" fill="#c33"/></svg>
<svg class="a" style="left:4px;top:435px" width="14" height="17" viewBox="0 0 14 17"><path d="M1.5,4.5 H12.5 L11.8,15 Q11.7,16 10.7,16 H3.3 Q2.3,16 2.2,15Z" fill="#ef8d3e" stroke="#c2661c" stroke-width="1"/>
<rect x=".8" y="2" width="12.4" height="3" rx="1" fill="#f5a866" stroke="#c2661c" stroke-width="1"/>
<rect x="5" y="8" width="4" height="4" fill="none" stroke="#fbe3cc" stroke-width="1.3"/></svg>
<svg class="a" style="left:3px;top:464px;" width="16" height="16"><use href="#sfolder"/></svg>
<svg class="a" style="left:3px;top:489px;" width="16" height="16"><use href="#sfolder"/></svg>
<svg class="a" style="left:3px;top:514px;" width="16" height="16"><use href="#sfolder"/></svg>
<svg class="a" style="left:3px;top:539px;" width="16" height="16"><use href="#sfolder"/></svg>
<svg class="a" style="left:212.5px;top:193.5px;" width="44" height="34"><use href="#folder"/></svg>
<svg class="a" style="left:367.5px;top:193.5px;" width="44" height="34"><use href="#folder"/></svg>
<svg class="a" style="left:522.5px;top:193.5px;" width="44" height="34"><use href="#folder"/></svg>
<svg class="a" style="left:677.5px;top:193.5px;" width="44" height="34"><use href="#folder"/></svg>
<svg class="a" style="left:832.5px;top:193.5px;" width="44" height="34"><use href="#folder"/></svg>
<svg class="a" style="left:987.5px;top:193.5px;" width="44" height="34"><use href="#folder"/></svg>
<svg class="a" style="left:1142.5px;top:193.5px;" width="44" height="34"><use href="#folder"/></svg>
<svg class="a" style="left:870px;top:180px;" width="20" height="20"><use href="#lnk"/></svg>
<svg class="a" style="left:1025px;top:180px;" width="20" height="20"><use href="#lnk"/></svg>
<svg class="a" style="left:212.5px;top:288.5px;" width="44" height="34"><use href="#folder"/></svg>
<svg class="a" style="left:373.5px;top:287px;" width="36" height="40"><use href="#pkg"/></svg>
<svg class="a" style="left:528.5px;top:287px;" width="36" height="40"><use href="#pkg"/></svg>
<svg class="a" style="left:683.5px;top:287px;" width="36" height="40"><use href="#pkg"/></svg>
<svg class="a" style="left:5px;top:1006.6px" width="14.2" height="11.8" viewBox="0 0 14.2 11.8"><rect x=".5" y=".5" width="13.2" height="10.8" fill="#fff"/><path d="M0,0 h2.6 v1 h-1.6 v1.8 h-1z M14.2,0 h-2.6 v1 h1.6 v1.8 h1z M0,11.8 h2.6 v-1 h-1.6 v-1.8 h-1z M14.2,11.8 h-2.6 v-1 h1.6 v-1.8 h1z" fill="#111"/>
<rect x="1.9" y="1.7" width="10.4" height="8.4" fill="url(#gDsk)" stroke="#3c2214" stroke-width=".8"/><ellipse cx="4.3" cy="5.3" rx="1.5" ry="1.9" fill="#fff" opacity=".85" transform="rotate(-25 4.3 5.3)"/></svg>
<svg class="a" style="left:40px;top:1004px" width="18" height="17" viewBox="0 0 18 17"><path d="M3,1 H11 L15,5 V16 H3Z" fill="#fdfdfd" stroke="#d9d6d2" stroke-width="1"/><path d="M3,2 H7 V15 H3Z" fill="#b9cfee" opacity=".8"/></svg>
<svg class="a" style="left:237.5px;top:1002.5px" width="18" height="18" viewBox="0 0 18 18"><g transform="translate(9,9) scale(0.6956521739130435)" filter="url(#soft)">
 <circle r="11.2" fill="url(#gFxB)"/>
 <path d="M3,-10.8 A11.2,11.2 0 0 1 7.5,8.3 Q4,7.5 5.5,3 Q9,-3 3,-10.8 Z" fill="#f2d84e"/>
 <path d="M-9.3,6.2 A11.2,11.2 0 0 0 7.5,8.3 Q5,5.5 1,5.8 Q-5,6 -9.3,6.2 Z" fill="#d8461c"/>
 <circle cx="1" cy="-3.8" r="6.9" fill="url(#gFxG)"/>
 <path d="M-4.5,-9 Q-2.5,-5 -3.5,-2 Q-4,1.5 -1,3.3 Q3,5 6.8,1.5 Q5,7.5 -1,7.3 Q-7,6.5 -9.5,2 Q-11,-3 -8,-7.5 Q-6,-9.5 -4.5,-9Z" fill="#e98428"/>
 <path d="M-5.5,-1 Q-3,1 -1.5,0 Q-1.5,2.2 -3.5,2 Q-5,1.2 -5.5,-1Z" fill="#a9521a"/>
</g></svg>
<svg class="a" style="left:436px;top:1003px" width="18" height="18" viewBox="0 0 18 18"><path d="M2,7 L8,3 L16,6 L15,14 L8,16.5 L2.5,13Z" fill="#efe9e6" stroke="#c8b8b8" stroke-width="1"/>
<path d="M5,6 L9,4.5 L13,6.5 L9,8.5Z" fill="#e8a8a8"/><path d="M8,8.5 V16" stroke="#c9b9b9" stroke-width="1"/><circle cx="12" cy="11" r="2.6" fill="#dbe6f2" stroke="#9aa8b8" stroke-width=".8"/></svg>
<svg class="a" style="left:633px;top:1004px" width="16" height="16" viewBox="0 0 16 16"><rect x=".8" y=".8" width="14.4" height="14.2" rx="1" fill="#fbf9f6" stroke="#a9a59f" stroke-width="1"/>
<rect x="2" y="8.2" width="12" height="5.6" fill="#8e9ea8"/><rect x="6" y="10.6" width="4" height="1" fill="#222"/><rect x="6.2" y="9.4" width="3.6" height="1" fill="#fff"/><rect x="6.2" y="12" width="3.6" height="1" fill="#fff"/></svg>
<div class="a" style="left:1177px;top:1000px;width:103px;height:24px;background:#ada195;border-top:1px solid #e9dfd2"></div>
<div class="a" style="left:1178px;top:1002px;width:25px;height:19px;background:#fdfdfd;border:1px solid #000"></div>
<div class="a" style="left:1203px;top:1001px;width:1px;height:23px;background:#e9dfd2"></div>
<div class="a" style="left:1228px;top:1001px;width:1px;height:23px;background:#e9dfd2"></div>
<div class="a" style="left:1253px;top:1001px;width:1px;height:23px;background:#e9dfd2"></div>
<div class="a" style="left:1278px;top:1001px;width:1px;height:23px;background:#e9dfd2"></div>
<svg class="a" style="left:1182.5px;top:1004px" width="16" height="15" viewBox="0 0 16 15"><rect x=".8" y=".8" width="14.4" height="14.2" rx="1" fill="#fbf9f6" stroke="#a9a59f" stroke-width="1"/>
<rect x="2" y="8.2" width="12" height="5.6" fill="#8e9ea8"/><rect x="6" y="10.6" width="4" height="1" fill="#222"/><rect x="6.2" y="9.4" width="3.6" height="1" fill="#fff"/><rect x="6.2" y="12" width="3.6" height="1" fill="#fff"/></svg></div></body></html>
